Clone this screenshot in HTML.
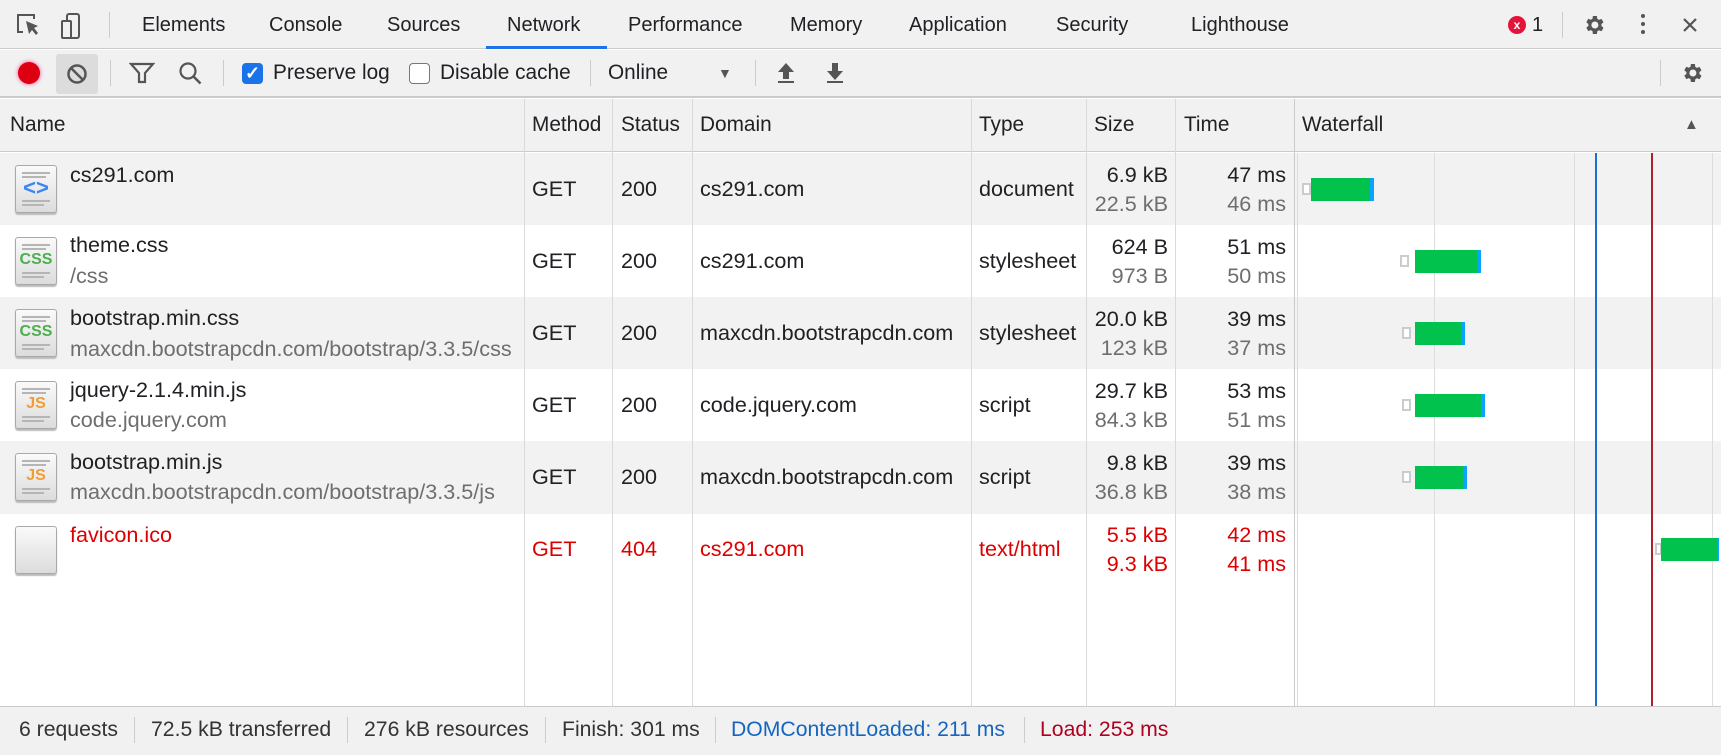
<!DOCTYPE html>
<html><head><meta charset="utf-8"><style>
*{margin:0;padding:0;box-sizing:border-box}
body{width:1721px;height:755px;overflow:hidden;background:#fff;font-family:"Liberation Sans",Arial,sans-serif;font-size:20px;color:#202124;position:relative}
.a{position:absolute;white-space:nowrap}
.t{line-height:24px}
.rw .t{font-size:21.6px}
.hd{font-size:20.8px}
.st{font-size:21.2px}
.g{color:#6e6e6e}
.r{color:#dd0000}
.ic{position:absolute;left:15px;width:42px;height:48px;border:1px solid #a9a9a9;border-radius:3px;background:linear-gradient(#fafafa,#dcdcdc);box-shadow:0 2px 1px #bbb}
.ic i{position:absolute;left:6px;height:2px;background:#b5b5b5}
.ic b{position:absolute;left:0;right:0;top:13px;text-align:center;font-size:16px;font-weight:bold;line-height:18px}
.wb{position:absolute;height:23px;background:#00c24c;border-right:4px solid #0aa4ff}
.wq{position:absolute;width:9px;height:12px;border:2px solid #ccc;background:#fff}
</style></head><body>
<div class="a" style="left:0;top:0;width:1721px;height:49px;background:#f1f1f1;border-bottom:1px solid #cbcbcb"></div>
<svg class="a" style="left:16px;top:12px" width="80" height="28" viewBox="0 0 80 28">
<path d="M6 3H2v17h5" fill="none" stroke="#555" stroke-width="2"/><path d="M6 3h12v4" fill="none" stroke="#555" stroke-width="2"/>
<path d="M10 9l3 13 3-4 4 5 2-2-4-5 4-2z" fill="#555"/>
<rect x="51" y="2" width="12" height="24" rx="2" fill="none" stroke="#555" stroke-width="2"/>
<rect x="46" y="9" width="9" height="17" rx="1" fill="#f1f1f1" stroke="#555" stroke-width="2"/>
</svg>
<div class="a" style="left:109px;top:12px;width:1px;height:26px;background:#ccc"></div>
<div class="a t" style="left:142px;top:13px">Elements</div>
<div class="a t" style="left:269px;top:13px">Console</div>
<div class="a t" style="left:387px;top:13px">Sources</div>
<div class="a t" style="left:507px;top:13px">Network</div>
<div class="a" style="left:486px;top:46px;width:121px;height:3px;background:#1a73e8"></div>
<div class="a t" style="left:628px;top:13px">Performance</div>
<div class="a t" style="left:790px;top:13px">Memory</div>
<div class="a t" style="left:909px;top:13px">Application</div>
<div class="a t" style="left:1056px;top:13px">Security</div>
<div class="a t" style="left:1191px;top:13px">Lighthouse</div>
<div class="a" style="left:1508px;top:16px;width:18px;height:18px;border-radius:50%;background:#e3143a;color:#fff;font-size:12px;font-weight:bold;text-align:center;line-height:18px">x</div>
<div class="a t" style="left:1532px;top:13px">1</div>
<div class="a" style="left:1562px;top:12px;width:1px;height:26px;background:#ccc"></div>
<svg class="a" style="left:1582px;top:13px" width="24" height="24" viewBox="0 0 24 24"><path fill="#555" d="M19.4 13a7.5 7.5 0 000-2l2.1-1.6-2-3.5-2.5 1a7 7 0 00-1.7-1L14.9 3h-4l-.4 2.7a7 7 0 00-1.7 1l-2.5-1-2 3.5L6.4 11a7.5 7.5 0 000 2l-2.1 1.6 2 3.5 2.5-1a7 7 0 001.7 1l.4 2.9h4l.4-2.7a7 7 0 001.7-1l2.5 1 2-3.5zM12.9 15.5a3.5 3.5 0 110-7 3.5 3.5 0 010 7z"/></svg>
<div class="a" style="left:1641px;top:14px;width:4px;height:4px;border-radius:50%;background:#555;box-shadow:0 8px 0 #555,0 16px 0 #555"></div>
<svg class="a" style="left:1682px;top:17px" width="16" height="16"><path d="M2 2l12 12M14 2L2 14" stroke="#555" stroke-width="2.2"/></svg>
<div class="a" style="left:0;top:50px;width:1721px;height:48px;background:#f1f1f1;border-bottom:2px solid #cbcbcb"></div>
<div class="a" style="left:18px;top:62px;width:22px;height:22px;border-radius:50%;background:#dd0010;box-shadow:0 0 4px #f49"></div>
<div class="a" style="left:56px;top:54px;width:42px;height:40px;background:#dcdcdc;border-radius:3px"></div>
<svg class="a" style="left:66px;top:63px" width="22" height="22"><circle cx="11" cy="11" r="8.5" fill="none" stroke="#555" stroke-width="2.5"/><path d="M5 5l12 12" stroke="#555" stroke-width="2.5"/></svg>
<div class="a" style="left:110px;top:60px;width:1px;height:26px;background:#ccc"></div>
<svg class="a" style="left:129px;top:61px" width="26" height="24"><path d="M2 3h22l-8 9v9h-6v-9z" fill="none" stroke="#555" stroke-width="2.2"/></svg>
<svg class="a" style="left:178px;top:61px" width="26" height="26"><circle cx="10" cy="10" r="7.5" fill="none" stroke="#555" stroke-width="2.2"/><path d="M15.5 15.5l7 7" stroke="#555" stroke-width="2.5"/></svg>
<div class="a" style="left:223px;top:60px;width:1px;height:26px;background:#ccc"></div>
<div class="a" style="left:242px;top:63px;width:21px;height:21px;border-radius:4px;background:#1a73e8;color:#fff;font-size:18px;font-weight:bold;text-align:center;line-height:21px">✓</div>
<div class="a t hd" style="left:273px;top:61px">Preserve log</div>
<div class="a" style="left:409px;top:63px;width:21px;height:21px;border-radius:4px;background:#fff;border:1px solid #777"></div>
<div class="a t hd" style="left:440px;top:61px">Disable cache</div>
<div class="a" style="left:590px;top:60px;width:1px;height:26px;background:#ccc"></div>
<div class="a t hd" style="left:608px;top:61px">Online</div>
<div class="a" style="left:718px;top:61px;font-size:14px;color:#555;line-height:24px">▼</div>
<div class="a" style="left:755px;top:60px;width:1px;height:26px;background:#ccc"></div>
<svg class="a" style="left:776px;top:61px" width="20" height="24"><path d="M10 2l8 9h-5v7H7v-7H2z" fill="#555"/><rect x="2" y="20" width="16" height="2" fill="#555"/></svg>
<svg class="a" style="left:825px;top:61px" width="20" height="24"><path d="M10 19l8-9h-5V2H7v8H2z" fill="#555"/><rect x="2" y="20" width="16" height="2" fill="#555"/></svg>
<div class="a" style="left:1660px;top:60px;width:1px;height:26px;background:#ccc"></div>
<svg class="a" style="left:1680px;top:61px" width="24" height="24" viewBox="0 0 24 24"><path fill="#555" d="M19.4 13a7.5 7.5 0 000-2l2.1-1.6-2-3.5-2.5 1a7 7 0 00-1.7-1L14.9 3h-4l-.4 2.7a7 7 0 00-1.7 1l-2.5-1-2 3.5L6.4 11a7.5 7.5 0 000 2l-2.1 1.6 2 3.5 2.5-1a7 7 0 001.7 1l.4 2.9h4l.4-2.7a7 7 0 001.7-1l2.5 1 2-3.5zM12.9 15.5a3.5 3.5 0 110-7 3.5 3.5 0 010 7z"/></svg>
<div class="a" style="left:0;top:99px;width:1721px;height:53px;background:#f1f1f1;border-bottom:1px solid #cbcbcb"></div>
<div class="a" style="left:0;top:153px;width:1721px;height:72px;background:#f2f2f2"></div>
<div class="a" style="left:0;top:297px;width:1721px;height:72px;background:#f2f2f2"></div>
<div class="a" style="left:0;top:441px;width:1721px;height:73px;background:#f2f2f2"></div>
<div class="a" style="left:524px;top:99px;width:1px;height:607px;background:#dadada"></div>
<div class="a" style="left:612px;top:99px;width:1px;height:607px;background:#dadada"></div>
<div class="a" style="left:692px;top:99px;width:1px;height:607px;background:#dadada"></div>
<div class="a" style="left:971px;top:99px;width:1px;height:607px;background:#dadada"></div>
<div class="a" style="left:1086px;top:99px;width:1px;height:607px;background:#dadada"></div>
<div class="a" style="left:1175px;top:99px;width:1px;height:607px;background:#dadada"></div>
<div class="a" style="left:1294px;top:99px;width:1px;height:607px;background:#cbcbcb"></div>
<div class="a" style="left:1297px;top:153px;width:1px;height:553px;background:#ddd"></div>
<div class="a" style="left:1434px;top:153px;width:1px;height:553px;background:#ddd"></div>
<div class="a" style="left:1574px;top:153px;width:1px;height:553px;background:#ddd"></div>
<div class="a" style="left:1712px;top:153px;width:1px;height:553px;background:#ddd"></div>
<div class="a" style="left:1595px;top:153px;width:2px;height:553px;background:#1a6fd0"></div>
<div class="a" style="left:1651px;top:153px;width:2px;height:553px;background:#b0202a"></div>
<div class="a t hd" style="left:10px;top:113px">Name</div>
<div class="a t hd" style="left:532px;top:113px">Method</div>
<div class="a t hd" style="left:621px;top:113px">Status</div>
<div class="a t hd" style="left:700px;top:113px">Domain</div>
<div class="a t hd" style="left:979px;top:113px">Type</div>
<div class="a t hd" style="left:1094px;top:113px">Size</div>
<div class="a t hd" style="left:1184px;top:113px">Time</div>
<div class="a t hd" style="left:1302px;top:113px">Waterfall</div>
<div class="a" style="left:1684px;top:113px;font-size:15px;color:#555;line-height:24px">▲</div>

<div class="rw">
<div class="ic" style="top:165px"><i style="top:6px;width:28px"></i><i style="top:10px;width:24px"></i><b style="color:#3b86f0;font-size:22px">&lt;&gt;</b><i style="top:34px;width:28px"></i><i style="top:38px;width:22px"></i></div>
<div class="a t" style="left:70px;top:163px">cs291.com</div>
<div class="a t" style="left:532px;top:177px">GET</div><div class="a t" style="left:621px;top:177px">200</div><div class="a t" style="left:700px;top:177px">cs291.com</div><div class="a t" style="left:979px;top:177px">document</div>
<div class="a t" style="right:553px;top:163px">6.9 kB</div><div class="a t g" style="right:553px;top:192px">22.5 kB</div>
<div class="a t" style="right:435px;top:163px">47 ms</div><div class="a t g" style="right:435px;top:192px">46 ms</div>
<div class="wq" style="left:1302px;top:183px"></div><div class="wb" style="left:1311px;top:178px;width:63px"></div>

<div class="ic" style="top:237px"><i style="top:6px;width:28px"></i><i style="top:10px;width:24px"></i><b style="color:#4caf50">CSS</b><i style="top:34px;width:28px"></i><i style="top:38px;width:22px"></i></div>
<div class="a t" style="left:70px;top:233px">theme.css</div><div class="a t g" style="left:70px;top:264px">/css</div>
<div class="a t" style="left:532px;top:249px">GET</div><div class="a t" style="left:621px;top:249px">200</div><div class="a t" style="left:700px;top:249px">cs291.com</div><div class="a t" style="left:979px;top:249px">stylesheet</div>
<div class="a t" style="right:553px;top:235px">624 B</div><div class="a t g" style="right:553px;top:264px">973 B</div>
<div class="a t" style="right:435px;top:235px">51 ms</div><div class="a t g" style="right:435px;top:264px">50 ms</div>
<div class="wq" style="left:1400px;top:255px"></div><div class="wb" style="left:1415px;top:250px;width:66px"></div>

<div class="ic" style="top:309px"><i style="top:6px;width:28px"></i><i style="top:10px;width:24px"></i><b style="color:#4caf50">CSS</b><i style="top:34px;width:28px"></i><i style="top:38px;width:22px"></i></div>
<div class="a t" style="left:70px;top:306px">bootstrap.min.css</div><div class="a t g" style="left:70px;top:337px">maxcdn.bootstrapcdn.com/bootstrap/3.3.5/css</div>
<div class="a t" style="left:532px;top:321px">GET</div><div class="a t" style="left:621px;top:321px">200</div><div class="a t" style="left:700px;top:321px">maxcdn.bootstrapcdn.com</div><div class="a t" style="left:979px;top:321px">stylesheet</div>
<div class="a t" style="right:553px;top:307px">20.0 kB</div><div class="a t g" style="right:553px;top:336px">123 kB</div>
<div class="a t" style="right:435px;top:307px">39 ms</div><div class="a t g" style="right:435px;top:336px">37 ms</div>
<div class="wq" style="left:1402px;top:327px"></div><div class="wb" style="left:1415px;top:322px;width:50px"></div>

<div class="ic" style="top:381px"><i style="top:6px;width:28px"></i><i style="top:10px;width:24px"></i><b style="color:#f39c34">JS</b><i style="top:34px;width:28px"></i><i style="top:38px;width:22px"></i></div>
<div class="a t" style="left:70px;top:378px">jquery-2.1.4.min.js</div><div class="a t g" style="left:70px;top:408px">code.jquery.com</div>
<div class="a t" style="left:532px;top:393px">GET</div><div class="a t" style="left:621px;top:393px">200</div><div class="a t" style="left:700px;top:393px">code.jquery.com</div><div class="a t" style="left:979px;top:393px">script</div>
<div class="a t" style="right:553px;top:379px">29.7 kB</div><div class="a t g" style="right:553px;top:408px">84.3 kB</div>
<div class="a t" style="right:435px;top:379px">53 ms</div><div class="a t g" style="right:435px;top:408px">51 ms</div>
<div class="wq" style="left:1402px;top:399px"></div><div class="wb" style="left:1415px;top:394px;width:70px"></div>

<div class="ic" style="top:453px"><i style="top:6px;width:28px"></i><i style="top:10px;width:24px"></i><b style="color:#f39c34">JS</b><i style="top:34px;width:28px"></i><i style="top:38px;width:22px"></i></div>
<div class="a t" style="left:70px;top:450px">bootstrap.min.js</div><div class="a t g" style="left:70px;top:480px">maxcdn.bootstrapcdn.com/bootstrap/3.3.5/js</div>
<div class="a t" style="left:532px;top:465px">GET</div><div class="a t" style="left:621px;top:465px">200</div><div class="a t" style="left:700px;top:465px">maxcdn.bootstrapcdn.com</div><div class="a t" style="left:979px;top:465px">script</div>
<div class="a t" style="right:553px;top:451px">9.8 kB</div><div class="a t g" style="right:553px;top:480px">36.8 kB</div>
<div class="a t" style="right:435px;top:451px">39 ms</div><div class="a t g" style="right:435px;top:480px">38 ms</div>
<div class="wq" style="left:1402px;top:471px"></div><div class="wb" style="left:1415px;top:466px;width:52px"></div>

<div class="ic" style="top:526px"></div>
<div class="a t r" style="left:70px;top:523px">favicon.ico</div>
<div class="a t r" style="left:532px;top:537px">GET</div><div class="a t r" style="left:621px;top:537px">404</div><div class="a t r" style="left:700px;top:537px">cs291.com</div><div class="a t r" style="left:979px;top:537px">text/html</div>
<div class="a t r" style="right:553px;top:523px">5.5 kB</div><div class="a t r" style="right:553px;top:552px">9.3 kB</div>
<div class="a t r" style="right:435px;top:523px">42 ms</div><div class="a t r" style="right:435px;top:552px">41 ms</div>
<div class="wq" style="left:1655px;top:543px;width:7px"></div><div class="wb" style="left:1661px;top:538px;width:58px;border-right-width:2px"></div>
</div>

<div class="a" style="left:0;top:706px;width:1721px;height:49px;background:#f1f1f1;border-top:1px solid #cbcbcb"></div>
<div class="a t st" style="left:19px;top:718px;color:#333">6 requests</div>
<div class="a" style="left:134px;top:717px;width:1px;height:26px;background:#ccc"></div>
<div class="a t st" style="left:151px;top:718px;color:#333">72.5 kB transferred</div>
<div class="a" style="left:347px;top:717px;width:1px;height:26px;background:#ccc"></div>
<div class="a t st" style="left:364px;top:718px;color:#333">276 kB resources</div>
<div class="a" style="left:545px;top:717px;width:1px;height:26px;background:#ccc"></div>
<div class="a t st" style="left:562px;top:718px;color:#333">Finish: 301 ms</div>
<div class="a" style="left:715px;top:717px;width:1px;height:26px;background:#ccc"></div>
<div class="a t st" style="left:731px;top:718px;color:#1565c0">DOMContentLoaded: 211 ms</div>
<div class="a" style="left:1024px;top:717px;width:1px;height:26px;background:#ccc"></div>
<div class="a t st" style="left:1040px;top:718px;color:#b00020">Load: 253 ms</div>
</body></html>
